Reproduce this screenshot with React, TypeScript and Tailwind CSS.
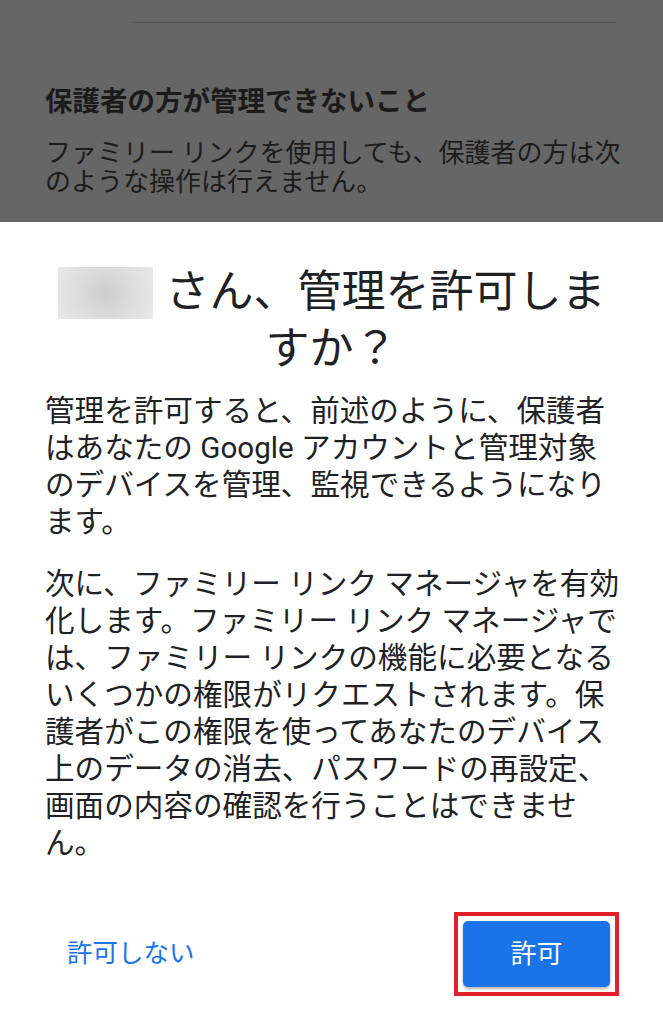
import React from 'react'

const bodyP1 = [
  '管理を許可すると、前述のように、保護者',
  'はあなたの Google アカウントと管理対象',
  'のデバイスを管理、監視できるようになり',
  'ます。',
]

const bodyP2 = [
  '次に、ファミリー リンク マネージャを有効',
  '化します。ファミリー リンク マネージャで',
  'は、ファミリー リンクの機能に必要となる',
  'いくつかの権限がリクエストされます。保',
  '護者がこの権限を使ってあなたのデバイス',
  '上のデータの消去、パスワードの再設定、',
  '画面の内容の確認を行うことはできませ',
  'ん。',
]

function Lines({ lines }: { lines: string[] }) {
  return (
    <div>
      {lines.map((l, i) => (
        <div key={i} className="whitespace-nowrap">
          {l}
        </div>
      ))}
    </div>
  )
}

export default function App() {
  return (
    <div className="w-[663px] h-[1024px] flex flex-col overflow-hidden font-['Roboto','Noto_Sans_CJK_JP',sans-serif]">
      {/* Dimmed page behind dialog */}
      <div className="h-[222px] bg-[#666666] flex flex-col shrink-0">
        <div className="ml-[133px] mr-[46px] mt-[22px] h-px bg-[#575757]"></div>
        <div className="px-[45px] pt-[62px]">
          <div className="text-[27.5px] leading-[34px] font-bold text-[#1b1b1b]">保護者の方が管理できないこと</div>
          <div className="mt-[20px] text-[26px] leading-[29px] text-[#1c1c1c]">
            <div className="whitespace-nowrap">ファミリー リンクを使用しても、保護者の方は次</div>
            <div className="whitespace-nowrap">のような操作は行えません。</div>
          </div>
        </div>
      </div>

      {/* Dialog */}
      <div className="flex-1 bg-white flex flex-col px-[45px] pt-[42px]">
        <div className="text-[44px] leading-[57px] text-[#202124] flex flex-col items-center">
          <div className="flex items-center whitespace-nowrap">
            <div className="w-[95px] h-[52px] mr-[13px] bg-[radial-gradient(circle,#cdcdcd_0%,#dedede_55%,#e8e8e8_100%)]"></div>
            <span>さん、管理を許可しま</span>
          </div>
          <div className="whitespace-nowrap">すか？</div>
        </div>

        <div className="mt-[15px] text-[29.6px] leading-[37px] text-[#202124]">
          <Lines lines={bodyP1} />
          <div className="mt-[25px]">
            <Lines lines={bodyP2} />
          </div>
        </div>

        <div className="mt-[50px] flex items-center justify-between pl-[22px] mr-[-1px]">
          <button className="text-[25.5px] text-[#1a73e8] leading-none">許可しない</button>
          <div className="border-[4px] border-[#e3202a] p-[5px]">
            <button className="w-[147px] h-[66px] rounded-[5px] bg-[#1a73e8] text-white text-[26px] shadow-[0_2px_3px_rgba(0,0,0,0.3)] flex items-center justify-center">
              許可
            </button>
          </div>
        </div>
      </div>
    </div>
  )
}
